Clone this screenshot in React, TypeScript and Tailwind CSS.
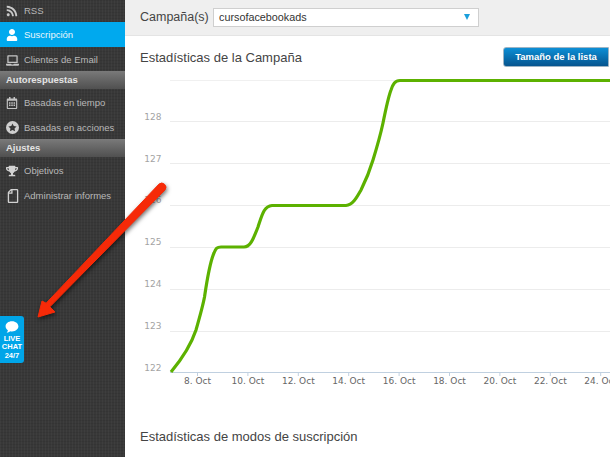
import React from 'react';
import { FaRss, FaUser, FaLaptop, FaRegCalendarAlt, FaTrophy, FaRegFile } from 'react-icons/fa';

const grid = [121.5, 163.5, 205.5, 247.5, 289.5, 331.5];
const yLabels = [
  { t: '128', y: 117 },
  { t: '127', y: 159 },
  { t: '126', y: 200 },
  { t: '125', y: 242 },
  { t: '124', y: 284 },
  { t: '123', y: 326 },
  { t: '122', y: 368 },
];
const xTicks = ['8. Oct', '10. Oct', '12. Oct', '14. Oct', '16. Oct', '18. Oct', '20. Oct', '22. Oct', '24. Oct'];

const StarCircle = () => (
  <svg width="13" height="13" viewBox="0 0 24 24" fill="#cfcfcf">
    <path
      fillRule="evenodd"
      d="M12 0a12 12 0 1 0 0 24 12 12 0 0 0 0-24Zm0 4.5 2.3 4.9 5.3.7-3.9 3.6 1 5.3-4.7-2.6-4.7 2.6 1-5.3-3.9-3.6 5.3-.7Z"
    />
  </svg>
);

const NavItem = ({
  icon,
  label,
  active,
  className,
}: {
  icon: React.ReactNode;
  label: string;
  active?: boolean;
  className: string;
}) => (
  <div
    className={`flex items-center pl-[6px] ${className} ${active ? 'bg-[#00a9ee] text-[#eaf6fb]' : 'text-[#b9b9b9]'}`}
  >
    <span className="w-[18px] flex justify-start items-center">{icon}</span>
    <span className="text-[9.5px] leading-none">{label}</span>
  </div>
);

const SectionHeader = ({ label }: { label: string }) => (
  <div className="h-[18px] flex items-center pl-[6px] bg-gradient-to-b from-[#7a7a7a] to-[#505050] text-[#e4e4e4] text-[9.5px] font-bold">
    {label}
  </div>
);

const Sidebar = () => (
  <aside className="w-[125px] h-[457px] shrink-0 bg-[#383838] bg-[repeating-linear-gradient(90deg,rgba(255,255,255,0.03)_0,rgba(255,255,255,0.03)_1px,transparent_1px,transparent_3px),repeating-linear-gradient(0deg,rgba(0,0,0,0.07)_0,rgba(0,0,0,0.07)_1px,transparent_1px,transparent_3px)]">
    <NavItem className="h-[22px]" label="RSS" icon={<FaRss size={12} color="#c9c9c9" />} />
    <NavItem className="h-[25px]" active label="Suscripción" icon={<FaUser size={12} color="#ffffff" />} />
    <NavItem className="h-[24px] pt-[2px]" label="Clientes de Email" icon={<FaLaptop size={13} color="#c4c4c4" />} />
    <SectionHeader label="Autorespuestas" />
    <NavItem className="h-[25px] mt-[1px] pt-[1px]" label="Basadas en tiempo" icon={<FaRegCalendarAlt size={12} color="#c4c4c4" />} />
    <NavItem className="h-[24px] pt-[1px]" label="Basadas en acciones" icon={<StarCircle />} />
    <SectionHeader label="Ajustes" />
    <NavItem className="h-[25px] mt-[1px]" label="Objetivos" icon={<FaTrophy size={12} color="#d2d2d2" />} />
    <NavItem className="h-[24px] pt-[1px]" label="Administrar informes" icon={<FaRegFile size={14} color="#d2d2d2" className="-scale-x-100" />} />
  </aside>
);

const Chart = () => (
  <svg width="485" height="320" viewBox="125 76 485 320" className="block">
    <line x1="170" x2="610" y1="80.5" y2="80.5" stroke="#f0f0f0" />
    {grid.map((y) => (
      <line key={y} x1="170" x2="610" y1={y} y2={y} stroke="#ececec" />
    ))}
    {yLabels.map((l) => (
      <text key={l.t} x="161.500" y={l.y} textAnchor="end" dominantBaseline="middle" fontSize="9" fill="#a3a3a3" fontFamily="DejaVu Sans, sans-serif">
        {l.t}
      </text>
    ))}
    <line x1="170" x2="610" y1="372.5" y2="372.5" stroke="#c0d0e0" />
    {xTicks.map((t, i) => (
      <g key={t}>
        <line x1={197.5 + i * 50.4} x2={197.5 + i * 50.4} y1="372" y2="376" stroke="#c0d0e0" />
        <text x={197.5 + i * 50.4} y="381" textAnchor="middle" dominantBaseline="middle" fontSize="9" fill="#666666" fontFamily="DejaVu Sans, sans-serif">
          {t}
        </text>
      </g>
    ))}
    <path
      d="M171 372 C181 360 191 345 196 330 C200 316 203 305 204.500 297 C207 280 210 262 214 253 C216 248 217 247 221 247 L244 247 C250 247 253 240 258 227 C262 215 264 206 272 205.500 L346 205.500 C353 205 357 197 361 190 C366 180 370 170 373 160 C377 147 380 137 383 123 C386 108 388 98 391 90 C393 84 395 80.500 400 80.500 L610 80.500"
      fill="none"
      stroke="#5cb100"
      strokeWidth="3.200"
    />
  </svg>
);

export default function App() {
  return (
    <div className="relative w-[610px] h-[457px] overflow-hidden flex bg-white font-['Liberation_Sans',Arial,sans-serif]">
      <Sidebar />
      <main className="flex-1 min-w-0">
        <div className="h-[36px] bg-[#efefef] border-b border-[#e4e4e4] flex items-center pl-[15px] gap-[4px]">
          <span className="w-[69px] text-[12.5px] text-[#444444] whitespace-nowrap">Campaña(s)</span>
          <div className="w-[266px] h-[19px] -mt-[1px] bg-white border border-[#cfcfcf] flex items-center justify-between pl-[5px] pr-[8px]">
            <span className="text-[10.8px] text-[#333333]">cursofacebookads</span>
            <span className="w-0 h-0 border-x-[3px] border-x-transparent border-t-[6px] border-t-[#1a9fdc]" />
          </div>
        </div>
        <div className="h-[36px] mt-[4px] flex items-center justify-between pl-[15px]">
          <h2 className="text-[13px] text-[#444444] font-normal">Estadísticas de la Campaña</h2>
          <button className="w-[106px] h-[20px] -mt-[2px] mr-[1px] rounded-l-[3px] border border-[#9db4c4] bg-gradient-to-b from-[#0d8fd6] to-[#06558f] text-white text-[9.5px] font-bold">
            Tamaño de la lista
          </button>
        </div>
        <Chart />
        <h2 className="mt-[31px] pl-[15px] text-[13px] text-[#444444] font-normal">Estadísticas de modos de suscripción</h2>
      </main>

      {/* annotation arrow drawn over the page */}
      <svg width="180" height="170" viewBox="0 160 180 170" className="absolute left-0 top-[160px] pointer-events-none drop-shadow-[1px_2px_2px_rgba(0,0,0,0.55)]">
        <path
          d="M38 317 L42 301 L46.100 303.200 L159 184.100 A4.200 4.200 0 0 1 165 189.900 L49.900 306.800 L55 312 Z"
          fill="#f62a08"
          stroke="#f62a08"
          strokeWidth="1"
          strokeLinejoin="round"
        />
      </svg>

      <div className="absolute left-0 top-[316px] w-[24px] h-[47px] bg-[#00a5e8] rounded-r-[3px] flex flex-col items-center text-white">
        <svg width="14" height="14" viewBox="0 0 24 22" className="mt-[4px]" fill="#ffffff">
          <path d="M12 1C5.600 1 1 4.800 1 9.600c0 2.800 1.600 5.200 4 6.800-.2 1.600-1 3-2.200 4.400 2.400-.2 4.600-1.200 6.200-2.600 1 .2 2 .3 3 .3 6.400 0 11-3.800 11-8.600S18.400 1 12 1Z" />
        </svg>
        <span className="text-[7.5px] leading-[8.300px] font-bold mt-[1px] text-center">
          LIVE
          <br />
          CHAT
          <br />
          24/7
        </span>
      </div>
    </div>
  );
}
